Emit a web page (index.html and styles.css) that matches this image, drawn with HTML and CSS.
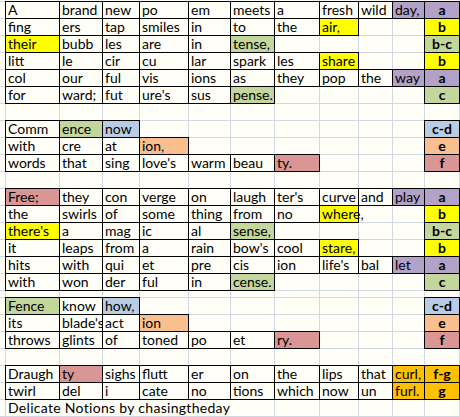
FILE: index.html
```html
<!DOCTYPE html>
<html>
<head>
<meta charset="utf-8">
<link rel="stylesheet" href="styles.css">
</head>
<body>
<div class="sheet">
  <div class="r edge"><span></span><span></span><span></span><span></span><span></span><span></span><span></span><span></span><span></span><span></span><span></span><span></span></div>

  <div class="r"><span></span><span class="b">A</span><span class="b">brand</span><span class="b">new</span><span class="b">po</span><span class="b">em</span><span class="b">meets</span><span class="b">a</span><span class="b">fresh</span><span class="b">wild</span><span class="b pu">day,</span><span class="b k pu">a</span></div>
  <div class="r"><span></span><span class="b">fing</span><span class="b">ers</span><span class="b">tap</span><span class="b">smiles</span><span class="b">in</span><span class="b">to</span><span class="b">the</span><span class="b ye">air,</span><span></span><span></span><span class="b k ye">b</span></div>
  <div class="r"><span></span><span class="b ye">their</span><span class="b">bubb</span><span class="b">les</span><span class="b">are</span><span class="b">in</span><span class="b gr">tense,</span><span></span><span></span><span></span><span></span><span class="b k gr">b-c</span></div>
  <div class="r"><span></span><span class="b">litt</span><span class="b">le</span><span class="b">cir</span><span class="b">cu</span><span class="b">lar</span><span class="b">spark</span><span class="b">les</span><span class="b ye">share</span><span></span><span></span><span class="b k ye">b</span></div>
  <div class="r"><span></span><span class="b">col</span><span class="b">our</span><span class="b">ful</span><span class="b">vis</span><span class="b">ions</span><span class="b">as</span><span class="b">they</span><span class="b">pop</span><span class="b">the</span><span class="b pu">way</span><span class="b k pu">a</span></div>
  <div class="r"><span></span><span class="b">for</span><span class="b">ward;</span><span class="b">fut</span><span class="b">ure's</span><span class="b">sus</span><span class="b gr">pense.</span><span></span><span></span><span></span><span></span><span class="b k gr">c</span></div>
  <div class="r"><span></span><span></span><span></span><span></span><span></span><span></span><span></span><span></span><span></span><span></span><span></span><span></span></div>

  <div class="r"><span></span><span class="b">Comm</span><span class="b gr">ence</span><span class="b bl">now</span><span></span><span></span><span></span><span></span><span></span><span></span><span></span><span class="b k bl">c-d</span></div>
  <div class="r"><span></span><span class="b">with</span><span class="b">cre</span><span class="b">at</span><span class="b or">ion,</span><span></span><span></span><span></span><span></span><span></span><span></span><span class="b k or">e</span></div>
  <div class="r"><span></span><span class="b">words</span><span class="b">that</span><span class="b">sing</span><span class="b">love's</span><span class="b">warm</span><span class="b">beau</span><span class="b rd">ty.</span><span></span><span></span><span></span><span class="b k rd">f</span></div>
  <div class="r"><span></span><span></span><span></span><span></span><span></span><span></span><span></span><span></span><span></span><span></span><span></span><span></span></div>

  <div class="r"><span></span><span class="b rd">Free;</span><span class="b">they</span><span class="b">con</span><span class="b">verge</span><span class="b">on</span><span class="b">laugh</span><span class="b">ter's</span><span class="b">curve</span><span class="b">and</span><span class="b pu">play</span><span class="b k pu">a</span></div>
  <div class="r"><span></span><span class="b">the</span><span class="b">swirls</span><span class="b">of</span><span class="b">some</span><span class="b">thing</span><span class="b">from</span><span class="b">no</span><span class="b ye ov">where,</span><span></span><span></span><span class="b k ye">b</span></div>
  <div class="r"><span></span><span class="b ye">there's</span><span class="b">a</span><span class="b">mag</span><span class="b">ic</span><span class="b">al</span><span class="b gr">sense,</span><span></span><span></span><span></span><span></span><span class="b k gr">b-c</span></div>
  <div class="r"><span></span><span class="b">it</span><span class="b">leaps</span><span class="b">from</span><span class="b">a</span><span class="b">rain</span><span class="b">bow's</span><span class="b">cool</span><span class="b ye">stare,</span><span></span><span></span><span class="b k ye">b</span></div>
  <div class="r"><span></span><span class="b">hits</span><span class="b">with</span><span class="b">qui</span><span class="b">et</span><span class="b">pre</span><span class="b">cis</span><span class="b">ion</span><span class="b">life's</span><span class="b">bal</span><span class="b pu">let</span><span class="b k pu">a</span></div>
  <div class="r"><span></span><span class="b">with</span><span class="b">won</span><span class="b">der</span><span class="b">ful</span><span class="b">in</span><span class="b gr">cense.</span><span></span><span></span><span></span><span></span><span class="b k gr">c</span></div>
  <div class="r thin"><span></span><span></span><span></span><span></span><span></span><span></span><span></span><span></span><span></span><span></span><span></span><span></span></div>

  <div class="r"><span></span><span class="b gr">Fence</span><span class="b">know</span><span class="b bl">how,</span><span></span><span></span><span></span><span></span><span></span><span></span><span></span><span class="b k bl">c-d</span></div>
  <div class="r"><span></span><span class="b">its</span><span class="b">blade's</span><span class="b">act</span><span class="b or">ion</span><span></span><span></span><span></span><span></span><span></span><span></span><span class="b k or">e</span></div>
  <div class="r"><span></span><span class="b">throws</span><span class="b">glints</span><span class="b">of</span><span class="b">toned</span><span class="b">po</span><span class="b">et</span><span class="b rd">ry.</span><span></span><span></span><span></span><span class="b k rd">f</span></div>
  <div class="r"><span></span><span></span><span></span><span></span><span></span><span></span><span></span><span></span><span></span><span></span><span></span><span></span></div>

  <div class="r"><span></span><span class="b">Draugh</span><span class="b rd">ty</span><span class="b">sighs</span><span class="b">flutt</span><span class="b">er</span><span class="b">on</span><span class="b">the</span><span class="b">lips</span><span class="b">that</span><span class="b go">curl,</span><span class="b k go">f-g</span></div>
  <div class="r"><span></span><span class="b">twirl</span><span class="b">del</span><span class="b">i</span><span class="b">cate</span><span class="b">no</span><span class="b">tions</span><span class="b">which</span><span class="b">now</span><span class="b">un</span><span class="b go">furl.</span><span class="b k go">g</span></div>
  <div class="r"><span></span><span class="title">Delicate Notions by chasingtheday</span><span></span><span></span><span></span><span></span><span></span></div>
  <div class="r edge"><span></span><span></span><span></span><span></span><span></span><span></span><span></span><span></span><span></span><span></span><span></span><span></span></div>
</div>
</body>
</html>
```

FILE: styles.css
```css
html, body {
  margin: 0;
  padding: 0;
}

body {
  background: #fffff7;
  overflow: hidden;
  font-family: Lato, "Liberation Sans", sans-serif;
}

.sheet {
  display: flex;
  flex-direction: column;
  gap: 1px;
  width: 460px;
  background: #d0d7e5;
}

.r {
  display: grid;
  grid-template-columns: 5px 53px 42px 36px 48px 41px 43px 44px 38px 33px 31px 34px;
  column-gap: 1px;
  height: 16px;
}

.r.edge {
  height: 1px;
}

.r.thin {
  height: 6px;
}

.r > span {
  background: #fffff7;
  color: #000;
  font-size: 14px;
  line-height: 16px;
  padding-left: 2px;
  white-space: nowrap;
  overflow: hidden;
}

.r > .b {
  box-shadow: 0 0 0 1px #000;
}

.r > .k {
  padding-left: 0;
  text-align: center;
  font-weight: bold;
}

.r > .ov {
  overflow: visible;
  z-index: 1;
}

.r > .title {
  grid-column: span 6;
  letter-spacing: 0.3px;
}

.r > .pu { background: #b3a2c7; }
.r > .ye { background: #ffff00; }
.r > .gr { background: #c3d69b; }
.r > .bl { background: #b8cce4; }
.r > .or { background: #fabf8f; }
.r > .rd { background: #da9694; }
.r > .go { background: #ffc000; }
```
